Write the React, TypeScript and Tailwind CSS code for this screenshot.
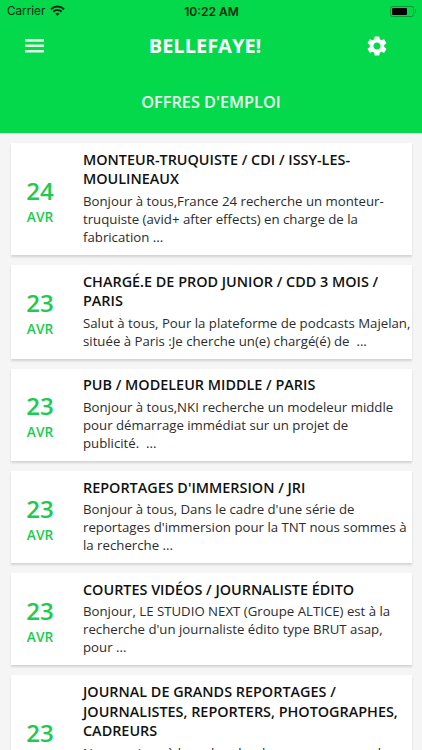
import React from "react";
import { MdSettings } from "react-icons/md";

type Job = { day: string; title: string[]; body: string[] };

const jobs: Job[] = [
  { day: "24", title: ["MONTEUR-TRUQUISTE / CDI / ISSY-LES-", "MOULINEAUX"], body: ["Bonjour à tous,France 24 recherche un monteur-", "truquiste (avid+ after effects) en charge de la", "fabrication ..."] },
  { day: "23", title: ["CHARGÉ.E DE PROD JUNIOR / CDD 3 MOIS /", "PARIS"], body: ["Salut à tous, Pour la plateforme de podcasts Majelan,", "située à Paris :Je cherche un(e) chargé(é) de  ..."] },
  { day: "23", title: ["PUB / MODELEUR MIDDLE / PARIS"], body: ["Bonjour à tous,NKI recherche un modeleur middle", "pour démarrage immédiat sur un projet de", "publicité.  ..."] },
  { day: "23", title: ["REPORTAGES D'IMMERSION / JRI"], body: ["Bonjour à tous, Dans le cadre d'une série de", "reportages d'immersion pour la TNT nous sommes à", "la recherche ..."] },
  { day: "23", title: ["COURTES VIDÉOS / JOURNALISTE ÉDITO"], body: ["Bonjour, LE STUDIO NEXT (Groupe ALTICE) est à la", "recherche d'un journaliste édito type BRUT asap,", "pour ..."] },
  { day: "23", title: ["JOURNAL DE GRANDS REPORTAGES /", "JOURNALISTES, REPORTERS, PHOTOGRAPHES,", "CADREURS"], body: ["Nous serions à la recherche de personnes pour le", "journal de grands", "reportages ..."] },
];

function WifiIcon() {
  return (
    <svg width="15" height="11" viewBox="0 0 15 11" fill="none" stroke="currentColor" strokeWidth="2">
      <path d="M1 4.2a9.2 9.2 0 0 1 13 0" />
      <path d="M3.4 6.8a5.8 5.8 0 0 1 8.2 0" />
      <path d="M7.5 10.8 5.4 8.7a3 3 0 0 1 4.2 0Z" fill="currentColor" stroke="none" />
    </svg>
  );
}

function MenuIcon() {
  return (
    <svg width="19" height="14" viewBox="0 0 19 14" fill="#e2fbe9">
      <rect width="19" height="2.7" />
      <rect y="5.5" width="19" height="2.5" />
      <rect y="11" width="19" height="2.5" />
    </svg>
  );
}

function JobCard({ job }: { job: Job }) {
  return (
    <article className="flex shrink-0 items-center bg-white pt-[6.7px] pb-[8.8px] shadow-[0_2px_2px_rgba(0,0,0,0.14)]">
      <div className="flex w-[59px] shrink-0 flex-col items-center pt-[7.5px] font-semibold text-[#1ccb4f]">
        <span className="text-[24px] leading-[29px]">{job.day}</span>
        <span className="text-[13.7px] leading-[23px]">AVR</span>
      </div>
      <div className="ml-[13.5px] whitespace-pre">
        <h2 className="pb-[2.9px] text-[14.4px] leading-[19.6px] font-semibold text-[#111]">
          {job.title.map((t) => <div key={t}>{t}</div>)}
        </h2>
        <div className="text-[13.23px] leading-[18.1px] text-[#2c2c2c]">
          {job.body.map((t) => <div key={t}>{t}</div>)}
        </div>
      </div>
    </article>
  );
}

export default function App() {
  return (
    <div className="flex h-[750px] w-[422px] flex-col overflow-hidden bg-[#f5f5f5] font-['Open_Sans',sans-serif]">
      <header className="h-[133px] shrink-0 bg-[#04d84b] text-white">
        <div className="grid h-[22px] grid-cols-3 items-center pr-[6px] pl-[7px] font-['Inter',sans-serif] text-[11.7px] text-[#03280f]">
          <span className="flex items-center gap-[5px]"><span className="pt-px">Carrier</span> <WifiIcon /></span>
          <span className="pt-px text-center text-[12px] font-semibold">10:22 AM</span>
          <span className="flex items-center justify-end gap-px">
            <span className="flex h-[11px] w-6 rounded-[2.5px] border border-[#039b36] p-px"><span className="w-[15px] rounded-[1px] bg-black" /></span>
            <span className="h-1 w-px bg-[#039b36]" />
          </span>
        </div>
        <div className="flex h-[48px] items-center justify-between pr-[33px] pl-[25px]">
          <MenuIcon />
          <h1 className="ml-px text-[20px] font-bold">BELLEFAYE!</h1>
          <MdSettings size={24} />
        </div>
        <div className="flex h-[65px] items-center justify-center text-[16.3px] font-semibold text-[#edfff2]">OFFRES D'EMPLOI</div>
      </header>
      <main className="flex flex-col gap-[10px] pt-[10px] pr-[10.5px] pl-[10.5px]">
        {jobs.map((j) => <JobCard key={j.title[0]} job={j} />)}
      </main>
    </div>
  );
}
